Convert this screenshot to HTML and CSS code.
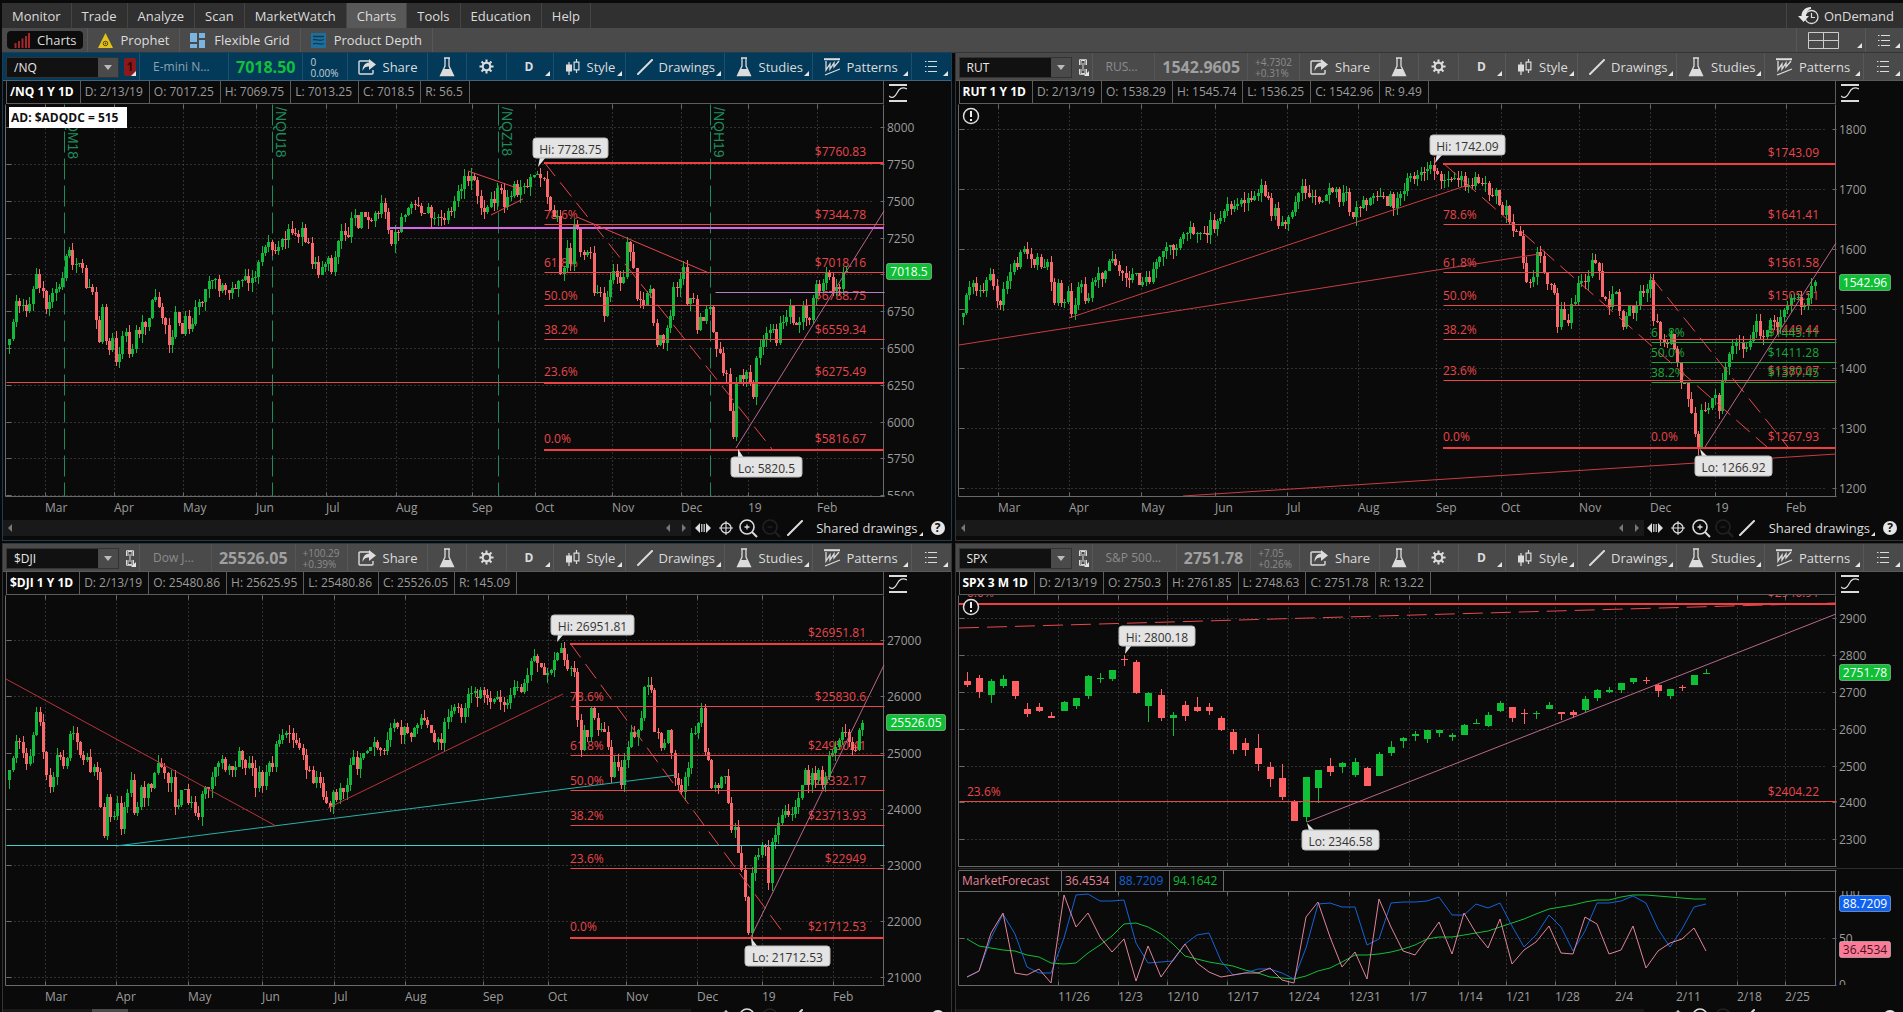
FILE: index.html
```html
<!DOCTYPE html>
<html lang="en">
<head>
<meta charset="utf-8">
<title>Charts</title>
<link rel="stylesheet" href="styles.css">
</head>
<body>
<svg class="sprite" aria-hidden="true">
  <symbol id="i-share" viewBox="0 0 18 16"><path d="M11 2H2a1 1 0 0 0-1 1v11a1 1 0 0 0 1 1h12a1 1 0 0 0 1-1v-3" fill="none" stroke="currentColor" stroke-width="1.4"/><path d="M11 0l7 5.500-7 5.500V7.500C8 7.300 6 8.500 4.500 12 4.500 7 7 3.700 11 3.500z" fill="currentColor"/></symbol>
  <symbol id="i-flask" viewBox="0 0 16 20"><path d="M5 1h6M6 1v8L1.500 18.500h13L10 9V1" fill="none" stroke="currentColor" stroke-width="1.300"/><path d="M4.500 12h7l3 6.500h-13z" fill="currentColor"/></symbol>
  <symbol id="i-gear" viewBox="0 0 16 16"><g stroke="currentColor" fill="none"><circle cx="8" cy="8" r="4" stroke-width="2.200"/><path stroke-width="2.200" d="M8 .5v3M8 12.500v3M.5 8h3M12.500 8h3M2.700 2.700l2.100 2.100M11.200 11.200l2.100 2.100M2.700 13.300l2.100-2.100M11.200 4.800l2.100-2.100"/></g></symbol>
  <symbol id="i-style" viewBox="0 0 14 16"><path d="M3 3v13M10.500 0v3M10.500 11v3" stroke="currentColor" stroke-width="1.200"/><path d="M0 5.500h6v7H0z" fill="currentColor"/><path d="M8.100 3.100h4.800v7.800H8.100z" fill="none" stroke="currentColor" stroke-width="1.200"/></symbol>
  <symbol id="i-line" viewBox="0 0 16 16"><path d="M1 15L15 1" stroke="currentColor" stroke-width="2" stroke-linecap="round"/></symbol>
  <symbol id="i-pattern" viewBox="0 0 17 18"><path d="M0 1.200h16" stroke="currentColor" stroke-width="2"/><path d="M2 3v9l4-6v5l4-6v4l5-6M1 17l15-6" fill="none" stroke="currentColor" stroke-width="1.300"/></symbol>
  <symbol id="i-list" viewBox="0 0 12 13"><path d="M3 1.500h9M3 6.500h9M3 11.500h9M0 1.500h1.500M0 6.500h1.500M0 11.500h1.500" stroke="currentColor" stroke-width="1.200"/></symbol>
  <symbol id="i-link" viewBox="0 0 9 16"><path d="M3 6V1.500h4V6M3 10v4.500h4V10M5 4v8M1.500 6V.7h7V6M1.500 10v5.300h7V10" fill="none" stroke="currentColor" stroke-width="1"/></symbol>
  <symbol id="i-curve" viewBox="0 0 18 18"><path d="M0 1h18M0 17h18" stroke="currentColor" stroke-width="2"/><path d="M0 12c3 3 6 1 8-3s5-7 10-4" fill="none" stroke="currentColor" stroke-width="1.200"/></symbol>
  <symbol id="i-spread" viewBox="0 0 16 12"><path d="M5 1v10L0 6zM11 1v10l5-5z" fill="currentColor"/><path d="M6.500 2v8M8 2v8M9.500 2v8" stroke="currentColor" stroke-width=".8"/></symbol>
  <symbol id="i-cross" viewBox="0 0 14 14"><circle cx="7" cy="7" r="5" fill="none" stroke="currentColor" stroke-width="1.300"/><path d="M7 0v14M0 7h14" stroke="currentColor" stroke-width="1.100"/></symbol>
  <symbol id="i-zin" viewBox="0 0 19 19"><circle cx="8" cy="8" r="7" fill="none" stroke="currentColor" stroke-width="1.600"/><path d="M5.500 8h5M8 5.500v5" stroke="currentColor" stroke-width="1.300"/><path d="M13 13l5 5" stroke="currentColor" stroke-width="2"/></symbol>
  <symbol id="i-zout" viewBox="0 0 19 19"><circle cx="8" cy="8" r="7" fill="none" stroke="currentColor" stroke-width="1.600"/><path d="M5.500 8h5" stroke="currentColor" stroke-width="1.300"/><path d="M13 13l5 5" stroke="currentColor" stroke-width="2"/></symbol>
</svg>

<header>
  <nav class="menu" aria-label="Main">
    <button>Monitor</button><button>Trade</button><button>Analyze</button><button>Scan</button><button>MarketWatch</button><button class="on">Charts</button><button>Tools</button><button>Education</button><button>Help</button>
    <button class="ondemand"><svg width="21" height="18" viewBox="0 0 21 18"><circle cx="13.500" cy="10" r="6.500" fill="none" stroke="#ddd" stroke-width="1.300"/><path d="M13.500 6v4.500h3.500" fill="none" stroke="#ddd" stroke-width="1.200"/><path d="M13 0C7 0 3.500 4 3.500 9H0l5.500 6L11 9H8c0-4 2-6.500 5-7z" fill="#e6e6e6"/></svg>OnDemand</button>
  </nav>
  <nav class="submenu" aria-label="Charts">
    <div class="sub"><button class="pill"><svg width="16" height="15" viewBox="0 0 16 15"><path d="M1.500 15V10M5 15V8M8.500 15V5.500M12 15V3M15 15V0" stroke="#a3262a" stroke-width="2"/></svg>Charts</button></div>
    <div class="sub"><button><svg width="15" height="15" viewBox="0 0 15 15"><path d="M7.500 0L15 15H0z" fill="#e3c21c"/><circle cx="7.500" cy="10.500" r="2.300" fill="none" stroke="#5a4a08"/><circle cx="7.500" cy="10.500" r=".9" fill="#5a4a08"/></svg>Prophet</button></div>
    <div class="sub"><button><svg width="16" height="15" viewBox="0 0 16 15"><path d="M0 0h7v9H0zM9 0h6v5H9zM0 11h7v4H0zM9 7h6v8H9z" fill="#7ab4e0"/></svg>Flexible Grid</button></div>
    <div class="sub"><button><svg width="15" height="15" viewBox="0 0 15 15"><path d="M0 0h15v15H0z" fill="#1f6f9c"/><path d="M2 3.500h11M2 7c3-2 5 2 11-.5M2 11c4-2 6 1.500 11-.5" fill="none" stroke="#0c3a56" stroke-width="1.300"/></svg>Product Depth</button></div>
    <div class="subright">
      <button class="gridpick drop" aria-label="Grid layout"><svg width="31" height="17" viewBox="0 0 31 17"><path d="M.5.5h30v16H.5zM15.500.5v16M.5 8.500h30" fill="none" stroke="#ccc"/></svg></button>
      <button class="listpick drop" aria-label="Menu"><svg width="12" height="13"><use href="#i-list"/></svg></button>
    </div>
  </nav>
</header>

<main>
  <section class="pane active" aria-label="/NQ">
    <div class="toolbar">
      <div class="symbol"><input aria-label="Symbol" value="/NQ"><button class="arrow" aria-label="Symbols"></button></div>
      <button class="link red drop" aria-label="Link"><b>1</b></button>
      <div class="quote"><span class="name">E-mini N…</span><b class="price">7018.50</b><span class="chg">0<br>0.00%</span></div>
      <button class="w-share"><svg width="18" height="16"><use href="#i-share"/></svg>Share</button>
      <button class="w-icon" aria-label="Studies setup"><svg width="16" height="20"><use href="#i-flask"/></svg></button>
      <button class="w-gear" aria-label="Settings"><svg width="15" height="15"><use href="#i-gear"/></svg></button>
      <button class="w-agg drop"><b>D</b></button>
      <button class="w-style drop"><svg width="14" height="16"><use href="#i-style"/></svg>Style</button>
      <button class="w-wide drop"><svg width="16" height="16"><use href="#i-line"/></svg>Drawings</button>
      <button class="w-studies drop"><svg width="16" height="20"><use href="#i-flask"/></svg>Studies</button>
      <button class="w-wide drop"><svg width="17" height="18"><use href="#i-pattern"/></svg>Patterns</button>
      <button class="w-list drop" aria-label="Menu"><svg width="12" height="13"><use href="#i-list"/></svg></button>
    </div>
    <div class="info"><div class="cells"><b>/NQ 1 Y 1D</b><span>D: 2/13/19</span><span>O: 7017.25</span><span>H: 7069.75</span><span>L: 7013.25</span><span>C: 7018.5</span><span>R: 56.5</span></div><button class="curve" aria-label="Scale"><svg width="18" height="18"><use href="#i-curve"/></svg></button></div>
    <div class="chart" data-chart="nq"></div>
    <div class="footer">
      <div class="track"><i class="left"></i><span></span><i class="left"></i><i class="right"></i></div>
      <button aria-label="Spread"><svg width="16" height="12"><use href="#i-spread"/></svg></button><button aria-label="Crosshair"><svg width="14" height="14"><use href="#i-cross"/></svg></button><button aria-label="Zoom in"><svg width="19" height="19"><use href="#i-zin"/></svg></button><button class="off" aria-label="Zoom out"><svg width="19" height="19"><use href="#i-zout"/></svg></button><button aria-label="Line"><svg width="16" height="16"><use href="#i-line"/></svg></button>
      <button class="shared drop">Shared drawings</button><button class="help" aria-label="Help">?</button>
    </div>
  </section>

  <section class="pane" aria-label="RUT">
    <div class="toolbar">
      <div class="symbol"><input aria-label="Symbol" value="RUT"><button class="arrow" aria-label="Symbols"></button></div>
      <button class="link drop" aria-label="Link"><svg width="9" height="16"><use href="#i-link"/></svg></button>
      <div class="quote"><span class="name">RUS…</span><b class="price">1542.9605</b><span class="chg">+4.7302<br>+0.31%</span></div>
      <button class="w-share"><svg width="18" height="16"><use href="#i-share"/></svg>Share</button>
      <button class="w-icon" aria-label="Studies setup"><svg width="16" height="20"><use href="#i-flask"/></svg></button>
      <button class="w-gear" aria-label="Settings"><svg width="15" height="15"><use href="#i-gear"/></svg></button>
      <button class="w-agg drop"><b>D</b></button>
      <button class="w-style drop"><svg width="14" height="16"><use href="#i-style"/></svg>Style</button>
      <button class="w-wide drop"><svg width="16" height="16"><use href="#i-line"/></svg>Drawings</button>
      <button class="w-studies drop"><svg width="16" height="20"><use href="#i-flask"/></svg>Studies</button>
      <button class="w-wide drop"><svg width="17" height="18"><use href="#i-pattern"/></svg>Patterns</button>
      <button class="w-list drop" aria-label="Menu"><svg width="12" height="13"><use href="#i-list"/></svg></button>
    </div>
    <div class="info"><div class="cells"><b>RUT 1 Y 1D</b><span>D: 2/13/19</span><span>O: 1538.29</span><span>H: 1545.74</span><span>L: 1536.25</span><span>C: 1542.96</span><span>R: 9.49</span></div><button class="curve" aria-label="Scale"><svg width="18" height="18"><use href="#i-curve"/></svg></button></div>
    <div class="chart" data-chart="rut"></div>
    <div class="footer">
      <div class="track"><i class="left"></i><span></span><i class="left"></i><i class="right"></i></div>
      <button aria-label="Spread"><svg width="16" height="12"><use href="#i-spread"/></svg></button><button aria-label="Crosshair"><svg width="14" height="14"><use href="#i-cross"/></svg></button><button aria-label="Zoom in"><svg width="19" height="19"><use href="#i-zin"/></svg></button><button class="off" aria-label="Zoom out"><svg width="19" height="19"><use href="#i-zout"/></svg></button><button aria-label="Line"><svg width="16" height="16"><use href="#i-line"/></svg></button>
      <button class="shared drop">Shared drawings</button><button class="help" aria-label="Help">?</button>
    </div>
  </section>

  <section class="pane" aria-label="$DJI">
    <div class="toolbar">
      <div class="symbol"><input aria-label="Symbol" value="$DJI"><button class="arrow" aria-label="Symbols"></button></div>
      <button class="link drop" aria-label="Link"><svg width="9" height="16"><use href="#i-link"/></svg></button>
      <div class="quote"><span class="name">Dow J…</span><b class="price">25526.05</b><span class="chg">+100.29<br>+0.39%</span></div>
      <button class="w-share"><svg width="18" height="16"><use href="#i-share"/></svg>Share</button>
      <button class="w-icon" aria-label="Studies setup"><svg width="16" height="20"><use href="#i-flask"/></svg></button>
      <button class="w-gear" aria-label="Settings"><svg width="15" height="15"><use href="#i-gear"/></svg></button>
      <button class="w-agg drop"><b>D</b></button>
      <button class="w-style drop"><svg width="14" height="16"><use href="#i-style"/></svg>Style</button>
      <button class="w-wide drop"><svg width="16" height="16"><use href="#i-line"/></svg>Drawings</button>
      <button class="w-studies drop"><svg width="16" height="20"><use href="#i-flask"/></svg>Studies</button>
      <button class="w-wide drop"><svg width="17" height="18"><use href="#i-pattern"/></svg>Patterns</button>
      <button class="w-list drop" aria-label="Menu"><svg width="12" height="13"><use href="#i-list"/></svg></button>
    </div>
    <div class="info"><div class="cells"><b>$DJI 1 Y 1D</b><span>D: 2/13/19</span><span>O: 25480.86</span><span>H: 25625.95</span><span>L: 25480.86</span><span>C: 25526.05</span><span>R: 145.09</span></div><button class="curve" aria-label="Scale"><svg width="18" height="18"><use href="#i-curve"/></svg></button></div>
    <div class="chart" data-chart="dji"></div>
    <div class="footer">
      <div class="track thumb"><i class="left"></i><span></span><i class="left"></i><i class="right"></i></div>
      <button aria-label="Spread"><svg width="16" height="12"><use href="#i-spread"/></svg></button><button aria-label="Crosshair"><svg width="14" height="14"><use href="#i-cross"/></svg></button><button aria-label="Zoom in"><svg width="19" height="19"><use href="#i-zin"/></svg></button><button class="off" aria-label="Zoom out"><svg width="19" height="19"><use href="#i-zout"/></svg></button><button aria-label="Line"><svg width="16" height="16"><use href="#i-line"/></svg></button>
      <button class="shared drop">Shared drawings</button><button class="help" aria-label="Help">?</button>
    </div>
  </section>

  <section class="pane" aria-label="SPX">
    <div class="toolbar">
      <div class="symbol"><input aria-label="Symbol" value="SPX"><button class="arrow" aria-label="Symbols"></button></div>
      <button class="link drop" aria-label="Link"><svg width="9" height="16"><use href="#i-link"/></svg></button>
      <div class="quote"><span class="name">S&amp;P 500…</span><b class="price">2751.78</b><span class="chg">+7.05<br>+0.26%</span></div>
      <button class="w-share"><svg width="18" height="16"><use href="#i-share"/></svg>Share</button>
      <button class="w-icon" aria-label="Studies setup"><svg width="16" height="20"><use href="#i-flask"/></svg></button>
      <button class="w-gear" aria-label="Settings"><svg width="15" height="15"><use href="#i-gear"/></svg></button>
      <button class="w-agg drop"><b>D</b></button>
      <button class="w-style drop"><svg width="14" height="16"><use href="#i-style"/></svg>Style</button>
      <button class="w-wide drop"><svg width="16" height="16"><use href="#i-line"/></svg>Drawings</button>
      <button class="w-studies drop"><svg width="16" height="20"><use href="#i-flask"/></svg>Studies</button>
      <button class="w-wide drop"><svg width="17" height="18"><use href="#i-pattern"/></svg>Patterns</button>
      <button class="w-list drop" aria-label="Menu"><svg width="12" height="13"><use href="#i-list"/></svg></button>
    </div>
    <div class="info"><div class="cells"><b>SPX 3 M 1D</b><span>D: 2/13/19</span><span>O: 2750.3</span><span>H: 2761.85</span><span>L: 2748.63</span><span>C: 2751.78</span><span>R: 13.22</span></div><button class="curve" aria-label="Scale"><svg width="18" height="18"><use href="#i-curve"/></svg></button></div>
    <div class="chart" data-chart="spx"></div>
    <div class="footer">
      <div class="track"><i class="left"></i><span></span><i class="left"></i><i class="right"></i></div>
      <button aria-label="Spread"><svg width="16" height="12"><use href="#i-spread"/></svg></button><button aria-label="Crosshair"><svg width="14" height="14"><use href="#i-cross"/></svg></button><button aria-label="Zoom in"><svg width="19" height="19"><use href="#i-zin"/></svg></button><button class="off" aria-label="Zoom out"><svg width="19" height="19"><use href="#i-zout"/></svg></button><button aria-label="Line"><svg width="16" height="16"><use href="#i-line"/></svg></button>
      <button class="shared drop">Shared drawings</button><button class="help" aria-label="Help">?</button>
    </div>
  </section>
</main>
<script src="charts.js"></script>
</body>
</html>
```

FILE: styles.css
```css
* { box-sizing: border-box; }
body {
  margin: 0;
  height: 100vh;
  overflow: hidden;
  display: flex;
  flex-direction: column;
  background: #0a0a0a;
  color: #dcdcdc;
  font: 13px/16px "Open Sans", "Noto Sans", sans-serif;
}
button, input {
  font: inherit;
  color: inherit;
  background: none;
  border: 0;
  padding: 0;
  margin: 0;
}
svg { flex: none; }
.sprite { position: absolute; width: 0; height: 0; }

header { flex: none; padding: 3px 0 0 2px; }
.menu { display: flex; height: 25px; background: #303030; }
.menu button { padding: 0 10px; border-right: 1px solid #444; }
.menu .on { background: #585858; }
.menu .ondemand {
  margin-left: auto;
  display: flex;
  align-items: center;
  gap: 5px;
  padding: 0 9px 0 11px;
  border-right: 0;
  border-left: 1px solid #444;
}
.submenu { display: flex; height: 25px; background: #4a4a4a; border-bottom: 1px solid #3a3a3a; }
.sub { display: flex; align-items: center; padding: 0 10px; border-right: 1px solid #585858; }
.sub:first-child { padding: 0 4px 0 5px; }
.sub button { display: flex; align-items: center; gap: 8px; height: 18px; }
.sub .pill { gap: 7px; background: #0c0c0c; border-radius: 4px; padding: 0 6px 0 7px; }
.subright { margin-left: auto; display: flex; }
.subright button { display: flex; align-items: center; border-left: 1px solid #585858; }
.gridpick { width: 69px; padding-left: 11px; }
.listpick { width: 38px; padding-left: 12px; }

.drop { position: relative; }
.drop::after {
  content: "";
  position: absolute;
  right: 3px;
  bottom: 4px;
  border: solid transparent;
  border-width: 0 0 5px 5px;
  border-bottom-color: #e6e6e6;
}

main {
  flex: 1;
  min-height: 0;
  display: grid;
  grid-template-columns: 1fr 1fr;
  grid-template-rows: minmax(487px, 1fr) minmax(485px, 1fr);
  column-gap: 5px;
  row-gap: 4px;
  padding-left: 3px;
  background: #080808;
}
.pane { display: flex; flex-direction: column; min-width: 0; background: #0a0a0a; box-shadow: 0 0 0 1px #343434; }
.pane.active { box-shadow: 0 0 0 1px #1f3d50; }

.toolbar { display: flex; height: 28px; background: #4a4a4a; border-bottom: 1px solid #5a5a5a; }
.active .toolbar { background: #033a5a; border-color: #44627a; }
.toolbar > button {
  display: flex;
  align-items: center;
  flex: none;
  gap: 7px;
  border-right: 1px solid #585858;
}
.active .toolbar > button { border-color: #1d4f6c; }
.toolbar > button:last-child { border-right: 0; }
.symbol { display: flex; flex: none; width: 113px; height: 21px; margin: 4px 0 0 3px; border: 1px solid #333; background: #111; }
.symbol input { flex: 1; min-width: 0; padding-left: 7px; font-size: 12px; color: #e8e8e8; }
.arrow { display: flex; width: 20px; align-items: center; justify-content: center; background: #4a4a4a; }
.arrow::before { content: ""; border: solid transparent; border-width: 5px 4px 0; border-top-color: #bbb; }
.toolbar .link { width: 21px; padding-left: 6px; }
.link.red b { width: 12px; height: 18px; margin-left: -1px; background: #8c1a1c; color: #3a0606; border-radius: 2px; font-size: 12px; line-height: 18px; }
.quote { display: flex; flex: 1 1 208px; min-width: 0; border-right: 1px solid #585858; color: #8c8c8c; }
.active .quote { border-color: #1d4f6c; }
.name { flex: 1; min-width: 0; padding-left: 13px; font-size: 12px; line-height: 28px; white-space: nowrap; overflow: hidden; }
.price { padding: 0 7px; font-size: 16px; line-height: 28px; border: solid #555; border-width: 0 1px; color: #a0a0a0; }
.chg { padding: 4px 7px 0; font-size: 10px; line-height: 11px; }
.active .quote { color: #8ba3b0; }
.active .price { color: #12bf3c; border-color: #1d4f6c; }
.active .chg { color: #c5d0d6; padding-right: 8px; }
.w-share { width: 80px; padding-left: 10px; }
.w-icon { width: 39px; justify-content: center; }
.w-gear { width: 40px; justify-content: center; }
.w-agg { width: 47px; padding-left: 18px; font-size: 12px; }
.w-style { width: 72px; padding-left: 12px; }
.w-wide { width: 99px; padding-left: 11px; }
.toolbar > .w-wide { gap: 6px; }
.w-studies { width: 88px; padding-left: 11px; }
.w-list { width: 39px; padding-left: 13px; }

.info { display: flex; height: 23px; }
.cells {
  flex: 1;
  display: flex;
  margin-left: 3px;
  border: solid #5c5c5c;
  border-width: 0 1px 1px;
  font-size: 12px;
  line-height: 22px;
  color: #9a9a9a;
  white-space: nowrap;
}
.cells b, .cells span { padding: 0 6px 0 4px; border-right: 1px solid #5c5c5c; }
.cells b { color: #fff; padding-left: 3px; }
.curve { width: 67px; padding-left: 5px; text-align: left; }
.curve svg { display: block; }

.chart { flex: 1; min-height: 0; position: relative; }
.chart svg { position: absolute; inset: 0; width: 100%; height: 100%; }
.chart text { font-size: 12px; }

.footer { display: flex; align-items: flex-start; height: 20px; padding-right: 6px; }
.footer button { display: flex; align-items: center; justify-content: center; height: 16px; width: 23px; }
.track { flex: 1; display: flex; align-items: center; gap: 12px; height: 16px; padding: 0 5px; background: #191919; }
.track span { flex: 1; height: 16px; }
.track.thumb span { background: linear-gradient(#4a4a4a, #4a4a4a) 68px 0 / 36px 16px no-repeat; }
.track i { border: 4px solid transparent; }
.track .left { border-right-color: #777; border-left-width: 0; }
.track .right { border-left-color: #777; border-right-width: 0; }
.footer .off { color: #222; }
.footer .shared { width: auto; margin-left: 10px; padding-right: 5px; }
.footer .shared::after { right: 0; bottom: 0; border-width: 0 0 4px 4px; }
.footer .help { width: 14px; height: 14px; margin: 1px 0 0 8px; border-radius: 7px; background: #e6e6e6; color: #111; font-weight: bold; font-size: 12px; }
```

FILE: charts.js
```js
// Every chart is described on a 948px wide sheet; "origin" is the sheet's top-left
// corner in workspace coordinates. draw() maps the sheet onto the current pane size.
const RED = '#e8474c', GREEN = '#0fbf35', UP = '#12b83a', DOWN = '#f9686a', GRID = '#585858', AXIS = '#6a6a6a', TXT = '#9c9c9c';
const PINK = '#b8688a', CYAN = '#45cfd0', BLUE = '#1462d8', ROSE = '#e08498';

const charts = {
  nq: {
    origin: [3, 104], height: 416, right: 884, left: 6, bottom: 496,
    months: [[45,'Mar'],[114,'Apr'],[183,'May'],[256,'Jun'],[326,'Jul'],[396,'Aug'],[472,'Sep'],[535,'Oct'],[612,'Nov'],[681,'Dec'],[748,'19'],[817,'Feb']],
    levels: [[127,'8000'],[164,'7750'],[201,'7500'],[238,'7250'],[274,''],[311,'6750'],[348,'6500'],[385,'6250'],[422,'6000'],[458,'5750'],[495,'5500']],
    rolls: [[65,'/NQM18'],[273,'/NQU18'],[499,'/NQZ18'],[711,'/NQH19']],
    fib: { x: 544, end: 866, rows: [[162,'','$7760.83',2],[224,'78.6%','$7344.78'],[272,'61.8%','$7018.16'],[305,'50.0%','$6788.75'],[339,'38.2%','$6559.34'],[382,'23.6%','$6275.49',2],[449,'0.0%','$5816.67',2]] },
    lines: [[6,382,884,382,RED],[388,228,884,228,'#d866e8',2],[715,292,884,292,'#b87cc4'],[577,217,709,273,RED],[468,171,517,188,RED],[491,215,523,199,RED],[544,162,772,449,RED,1,'18 8'],[736,448,884,211,PINK]],
    hi: [533,138,75,538,167,'Hi: 7728.75'], lo: [731,457,71,738,449,'Lo: 5820.5'],
    tags: [[886,271,46,'7018.5',GREEN,'#fff']],
    runs: [
      { x: 9.3, end: 474.3, y: 100, open: 735, c: [718,665,603,618,616,632,612,566,522,565,572,628,607,578,568,560,535,467,450,495,492,490,505,563,560,576,660,725,622,722,750,715,785,762,708,697,763,748,690,703,665,682,655,600,590,620,655,675,735,710,637,670,702,648,688,672,620,605,606,568,543,540,538,572,555,570,578,563,566,543,541,528,548,533,531,487,458,440,427,450,452,440,418,420,386,400,403,412,385,425,428,492,485,525,500,492,473,515,470,422,392,405,412,353,345,383,337,350,360,362,338,343,310,335,390,433,395,397,350,346,325,313,316,318,340,340,320,355,354,352,355,360,332,333,303,272,268,227,243,228,240] },
      { x: 477.3, end: 846, y: 100, open: 240, c: [288,323,335,320,296,310,265,270,322,290,288,253,285,262,258,262,230,225,222,235,236,292,330,350,348,522,505,443,492,373,388,455,465,455,458,580,577,580,648,592,540,513,530,548,532,427,455,505,597,600,618,578,567,668,736,705,730,685,648,562,563,538,500,613,595,597,690,652,662,628,622,697,748,760,820,822,932,1012,845,825,838,815,850,890,775,740,718,700,690,688,730,668,665,650,617,670,675,665,617,655,660,595,553,573,548,518,532,572,560,567,515,513] }
    ]
  },
  rut: {
    origin: [956, 104], height: 416, right: 1836, left: 959, bottom: 496, warn: 116,
    months: [[998,'Mar'],[1069,'Apr'],[1141,'May'],[1215,'Jun'],[1287,'Jul'],[1358,'Aug'],[1436,'Sep'],[1501,'Oct'],[1579,'Nov'],[1650,'Dec'],[1715,'19'],[1786,'Feb']],
    levels: [[129,'1800'],[189,'1700'],[249,'1600'],[309,'1500'],[368,'1400'],[428,'1300'],[488,'1200']],
    fib: { x: 1443, end: 1819, rows: [[163,'','$1743.09',2],[224,'78.6%','$1641.41'],[272,'61.8%','$1561.58'],[305,'50.0%','$1505.51'],[339,'38.2%','$1449.44'],[380,'23.6%','$1380.07'],[447,'0.0%','$1267.93',2]] },
    fib2: { x: 1651, end: 1819, color: '#18a83a', rows: [[342,'61.8%','$1445.11'],[362,'50.0%','$1411.28'],[382,'38.2%','$1377.45']] },
    notes: [[1651,436,'0.0%',RED]],
    lines: [[1069,318,1468,185,'#c83c44'],[959,345,1539,254,'#c83c44'],[1183,496,1836,454,'#c83c44'],[1443,163,1767,447,RED,1,'18 8'],[1651,277,1788,447,RED,1,'18 8'],[1705,447,1836,243,PINK]],
    hi: [1430,135,75,1435,163,'Hi: 1742.09'], lo: [1695,456,77,1700,449,'Lo: 1266.92'],
    tags: [[1839,282,52,'1542.96',GREEN,'#fff']],
    runs: [
      { x: 962.7, end: 1424, y: 50, open: 800, c: [790,735,710,698,722,720,722,690,672,708,752,765,717,693,665,640,650,605,597,612,628,645,622,652,650,635,697,760,698,758,755,722,792,765,710,703,752,745,697,690,670,688,662,632,628,645,662,668,685,690,672,670,705,695,680,695,658,636,622,602,590,586,600,595,567,552,548,530,553,550,549,550,555,510,538,512,505,483,462,478,468,462,450,458,445,450,437,430,405,437,445,497,475,527,517,522,500,487,455,428,408,428,442,438,440,457,452,435,415,425,417,457,430,425,487,502,472,475,450,465,445,437,440,437,438,468,432,473,445,432,422,385,378,388,375,367,368] },
      { x: 1427, end: 1814.7, y: 100, open: 212, c: [207,195,212,222,243,240,237,238,235,240,228,262,255,258,232,248,253,250,285,287,270,315,345,318,365,392,393,408,490,545,545,532,455,468,518,553,555,580,682,627,660,668,612,605,550,543,545,528,480,488,512,590,597,622,582,577,633,682,648,618,640,615,573,580,568,540,662,665,718,730,732,703,747,790,850,850,898,940,1002,1040,930,930,925,895,885,932,840,800,762,738,725,727,748,742,722,695,663,708,712,690,660,667,680,650,630,615,595,593,590,622,615,595,557,547] }
    ]
  },
  dji: {
    origin: [3, 595], height: 414, right: 884, left: 6, bottom: 985,
    months: [[45,'Mar'],[116,'Apr'],[188,'May'],[262,'Jun'],[334,'Jul'],[405,'Aug'],[483,'Sep'],[548,'Oct'],[626,'Nov'],[697,'Dec'],[762,'19'],[833,'Feb']],
    levels: [[640,'27000'],[696,'26000'],[753,'25000'],[809,'24000'],[865,'23000'],[921,'22000'],[977,'21000']],
    fib: { x: 570, end: 866, rows: [[643,'','$26951.81',2],[706,'78.6%','$25830.6'],[755,'61.8%','$24950.41'],[790,'50.0%','$24332.17'],[825,'38.2%','$23713.93'],[868,'23.6%','$22949'],[937,'0.0%','$21712.53',2]] },
    lines: [[6,845,884,845,CYAN],[116,846,676,775,'#27b0a8'],[6,679,276,826,'#b8343c'],[328,808,563,694,'#b8343c'],[570,643,782,931,RED,1,'18 8'],[751,937,884,665,PINK]],
    hi: [551,615,83,557,642,'Hi: 26951.81'], lo: [745,946,85,751,938,'Lo: 21712.53'],
    tags: [[886,722,60,'25526.05',GREEN,'#fff']],
    runs: [
      { x: 9.3, end: 474.7, y: 540, open: 720, c: [690,655,603,605,640,672,648,585,517,545,635,705,740,710,645,650,678,655,583,580,605,645,660,650,697,682,695,800,887,770,832,828,790,868,800,760,720,818,800,742,775,732,745,700,668,680,700,730,712,800,795,750,748,790,785,820,832,762,740,748,712,682,668,658,690,678,690,680,632,660,685,670,685,745,697,738,697,670,680,612,600,585,578,580,600,608,625,645,690,690,728,710,730,770,790,802,755,780,745,755,735,675,652,688,655,640,632,622,605,625,630,632,600,565,548,560,585,562,580,590,565,555,535,540,555,580,605,598,610,545,530,512,500,505,530,505,462,458,452] },
      { x: 477, end: 862, y: 540, open: 470, c: [475,450,465,475,485,478,472,487,495,490,465,442,440,455,430,405,362,348,370,380,405,400,390,360,340,325,360,388,385,397,540,630,570,590,505,535,570,568,575,620,710,665,680,735,660,620,575,590,570,535,440,435,450,575,580,625,610,570,640,715,735,755,710,685,580,578,548,505,635,660,745,735,745,710,708,790,870,860,940,990,1070,1180,1000,950,945,918,922,1030,905,885,850,825,812,825,822,800,775,735,690,735,700,720,690,735,710,645,640,620,600,575,575,605,630,630,570,548] }
    ]
  },
  spx: {
    origin: [956, 595], height: 414, right: 1836, left: 959, bottom: 866, warn: 607, study: [870, 891, 985],
    months: [[1058,'11/26'],[1118,'12/3'],[1167,'12/10'],[1227,'12/17'],[1288,'12/24'],[1349,'12/31'],[1409,'1/7'],[1458,'1/14'],[1506,'1/21'],[1555,'1/28'],[1615,'2/4'],[1676,'2/11'],[1737,'2/18'],[1785,'2/25']],
    levels: [[618,'2900'],[655,'2800'],[692,'2700'],[729,'2600'],[766,'2500'],[802,'2400'],[839,'2300']],
    fib: { x: 967, lineX: 959, end: 1819, rows: [[603,'0.0%','$2940.91',2],[801,'23.6%','$2404.22']] },
    lines: [[959,628,1836,603,RED,1,'20 8'],[1307,822,1836,614,PINK]],
    hi: [1119,626,76,1125,654,'Hi: 2800.18'], lo: [1302,830,77,1307,823,'Lo: 2346.58'],
    tags: [[1839,672,52,'2751.78',GREEN,'#fff'],[1839,903,52,'88.7209','#0f62f0','#fff'],[1839,949,52,'36.4534','#fb7c98','#4a1020']],
    bars: [[52,397,423,435,440],[88,405,414,456,473],[124,418,423,465,490,1],[160,405,417,438,445,1],[196,422,423,468,478],[232,490,507,522,532],[268,490,501,513,515],[304,515,528,534,535],[343,484,486,513,514,1],[379,474,475,498,506,1],[415,405,408,468,476,1],[451,398,413,416,430,1],[487,389,390,417,423,1],[523,345,357,360,377],[559,361,366,460,462],[595,456,459,498,545,1],[634,447,465,534,542],[670,516,525,535,587,1],[706,484,495,528,544],[742,472,501,513,515],[778,490,501,513,526],[814,528,534,570,574],[850,566,576,630,643],[886,595,608,630,648],[925,583,624,672,692],[961,667,681,717,742],[997,672,714,771,779],[1033,779,786,843,844],[1069,710,711,831,845,1],[1105,689,690,744,790,1],[1141,655,678,696,708],[1177,666,669,682,698,1],[1216,655,666,706,712,1],[1252,682,684,738,739],[1288,636,642,708,708,1],[1324,603,621,639,648,1],[1360,590,594,602,625,1],[1396,572,582,588,602,1],[1432,570,570,598,608,1],[1468,570,570,580,592,1],[1507,578,586,590,602,1],[1543,553,555,585,586,1],[1579,538,548,551,553,1],[1615,516,524,558,560,1],[1651,484,489,513,515,1],[1687,501,501,534,547],[1723,507,519,523,553],[1759,514,519,523,538,1],[1798,486,494,507,508,1],[1834,516,517,521,540],[1870,510,515,525,533],[1906,467,477,510,518,1],[1942,448,450,474,482,1],[1978,440,449,455,460,1],[2014,428,429,450,458,1],[2050,413,414,426,432,1],[2089,412,419,423,431],[2125,432,434,453,472],[2161,447,447,468,478,1],[2197,435,441,445,453],[2233,404,405,434,434,1],[2269,388,399,402,402,1]],
    studies: [
      [GREEN, [1198,1217,1225,1231,1234,1246,1252,1268,1273,1270,1240,1215,1188,1153,1150,1162,1183,1212,1248,1258,1267,1271,1278,1289,1300,1311,1315,1318,1309,1294,1283,1265,1244,1246,1242,1237,1226,1216,1196,1192,1190,1186,1180,1174,1162,1150,1138,1122,1108,1100,1096,1087,1081,1079,1072,1066,1066,1069,1072,1075,1078,1078]],
      [BLUE, [1312,1293,1195,1122,1182,1282,1298,1300,1195,1066,1063,1084,1084,1081,1208,1270,1265,1263,1212,1184,1180,1262,1304,1298,1286,1286,1300,1318,1225,1093,1090,1102,1102,1216,1198,1090,1087,1087,1084,1072,1126,1126,1093,1105,1090,1157,1222,1186,1126,1160,1232,1172,1090,1090,1084,1068,1090,1168,1220,1168,1102,1093]],
      [ROSE, [1312,1293,1180,1120,1298,1306,1288,1328,1065,1162,1120,1192,1235,1197,1322,1218,1312,1260,1213,1268,1297,1312,1306,1298,1298,1285,1320,1330,1132,1086,1192,1280,1237,1316,1078,1162,1232,1246,1197,1147,1243,1120,1180,1225,1137,1271,1231,1205,1158,1240,1243,1130,1153,1243,1231,1157,1283,1234,1208,1198,1165,1232]]
    ]
  }
};

function draw(host) {
  const c = charts[host.dataset.chart];
  const W = host.clientWidth, H = host.clientHeight;
  const X = x => Math.round((x - c.origin[0]) * W / 948);
  const Y = y => Math.round((y - c.origin[1]) * H / c.height);
  const out = [];
  const line = (x1, y1, x2, y2, color, w = 1, dash = '') => {
    const flat = (y1 === y2 || x1 === x2) && w === 1 ? 0.5 : 0;
    out.push(`<line x1="${X(x1) + flat}" y1="${Y(y1) + flat}" x2="${X(x2) + flat}" y2="${Y(y2) + flat}" stroke="${color}" stroke-width="${w}"${dash ? ` stroke-dasharray="${dash}"` : ''}/>`);
  };
  const text = (x, y, s, color, more = '') => out.push(`<text x="${X(x)}" y="${Y(y) + 5}" fill="${color}" ${more}>${s}</text>`);
  const rect = (x, y, w, h, color) => out.push(`<rect x="${x}" y="${y}" width="${w}" height="${h}" fill="${color}"/>`);
  const top = c.origin[1];
  const clip = `clip-${host.dataset.chart}`;
  const sheetEnd = c.study ? c.study[2] : c.bottom;

  out.push(`<defs><clipPath id="${clip}"><rect x="0" y="0" width="${W}" height="${Y(c.bottom)}"/></clipPath><clipPath id="${clip}-s"><rect x="0" y="${c.study ? Y(c.study[1]) : 0}" width="${W}" height="${c.study ? Y(c.study[2]) - Y(c.study[1]) : 0}"/></clipPath></defs>`);

  // Grid, frame and ticks
  c.months.forEach(([x, s]) => {
    line(x, top, x, c.bottom, GRID, 1, '1 3');
    line(x, top, x, top + 4, AXIS); line(x, c.bottom - 4, x, c.bottom, AXIS);
    if (c.study) {
      line(x, c.study[1], x, c.study[2], GRID, 1, '1 3');
      line(x, c.study[1], x, c.study[1] + 4, AXIS); line(x, c.study[2] - 4, x, c.study[2], AXIS);
    }
    text(x, sheetEnd + 11, s, TXT);
  });
  out.push(`<g clip-path="url(#${clip})">`);
  c.levels.forEach(([y, s]) => {
    line(c.left, y, c.right - 12, y, GRID, 1, '1 3');
    line(c.left, y, c.left + 5, y, AXIS); line(c.right - 4, y, c.right, y, AXIS);
    if (s) text(c.right + 3, y, s, TXT);
  });
  out.push('</g>');
  line(c.left - 1, top, c.left - 1, c.bottom, AXIS); line(c.right - 1, top, c.right - 1, c.bottom, AXIS);
  line(c.left - 1, c.bottom, c.right, c.bottom, AXIS);

  (c.rolls || []).forEach(([x, s]) => {
    line(x - 1, top, x - 1, c.bottom, '#1f8a5c', 1, '21 6');
    out.push(`<text transform="translate(${X(x) + 3} 3) rotate(90)" fill="#1f8a5c" style="font-size:14px;font-family:'Liberation Sans',sans-serif">${s}</text>`);
  });

  out.push(`<g clip-path="url(#${clip})">`);
  [c.fib, c.fib2].forEach(f => f && f.rows.forEach(([y, pct, price, w]) => {
    const ty = y - (w ? 11 : 10);
    text(f.x, ty, pct, f.color || RED);
    text(f.end, ty, price, f.color || RED, 'text-anchor="end"');
  }));
  (c.notes || []).forEach(n => text(...n));

  // Candles: each body runs from the previous close to its own close
  let seed = 7;
  const rnd = () => (seed = seed * 16807 % 2147483647) / 2147483647;
  (c.runs || []).forEach(r => {
    let prev = r.open;
    r.c.forEach((v, i) => {
      const x = X(r.x + (r.end - r.x) * i / (r.c.length - 1));
      const hi = Y(r.y + (Math.min(prev, v) - rnd() * 24) / 3), lo = Y(r.y + (Math.max(prev, v) + rnd() * 28) / 3);
      const a = Y(r.y + Math.min(prev, v) / 3), b = Y(r.y + Math.max(prev, v) / 3);
      const color = v < prev ? UP : DOWN;
      rect(x, hi, 1, Math.max(1, lo - hi), color);
      rect(x - 1, a, 3, Math.max(1, b - a), color);
      prev = v;
    });
  });
  (c.bars || []).forEach(([bx, hi, a, b, lo, up]) => {
    const x = X(950 + bx / 3), q = v => Y(540 + v / 3), color = up ? GREEN : '#ff6063';
    rect(x, q(hi), 1, Math.max(1, q(lo) - q(hi)), color);
    rect(x - 3, q(a), 7, Math.max(1, q(b) - q(a)), color);
  });

  [c.fib, c.fib2].forEach(f => f && f.rows.forEach(([y, , , w]) => line(f.lineX || f.x, y + (w ? 1 : 0), c.right, y + (w ? 1 : 0), f.color || (w ? '#ee3e42' : RED), w || 1)));
  c.lines.forEach(l => line(...l));
  out.push('</g>');

  if (c.study) {
    const [t, m, b] = c.study;
    line(c.left - 1, t, c.right, t, AXIS); line(c.left - 1, m, c.right, m, AXIS); line(c.left - 1, b, c.right, b, AXIS);
    line(c.left - 1, t, c.left - 1, b, AXIS); line(c.right - 1, t, c.right - 1, b, AXIS);
    line(c.left - 1, t - 2, c.right + 67, t - 2, '#2c2c2c');
    [[962,'MarketForecast',ROSE,1061],[1065,'36.4534',ROSE,1115],[1119,'88.7209',BLUE,1169],[1173,'94.1642',GREEN,1223]].forEach(([x, s, color, end]) => { text(x, t + 10, s, color); line(end, t, end, m, AXIS); });
    line(c.left, 938, c.right - 12, 938, GRID, 1, '1 3');
    line(c.left, 938, c.left + 5, 938, AXIS); line(c.right - 4, 938, c.right, 938, AXIS);
    out.push(`<g clip-path="url(#${clip}-s)">`);
    text(c.right + 3, 892, '100', TXT); text(c.right + 3, 938, '50', TXT); text(c.right + 3, 984, '0', TXT);
    out.push('</g>');
    c.studies.forEach(([color, ys]) => out.push(`<polyline fill="none" stroke="${color}" stroke-width="1" points="${ys.map((y, i) => X(950 + c.bars[i][0] / 3) + ',' + Y(540 + y / 3)).join(' ')}"/>`));
  }

  // Callouts and price tags
  const callout = ([x, y, w, tx, ty, s]) => {
    const edge = ty > y ? Y(y) + 19 : Y(y) + 1;
    out.push(`<path d="M${X(tx)} ${Y(ty)}L${X(x) + 7} ${edge}H${X(x) + 13}z" fill="#e4e4e4"/><rect x="${X(x)}" y="${Y(y)}" width="${w}" height="20" rx="3" fill="#e4e4e4" stroke="#b8b8b8"/>`);
    out.push(`<text x="${X(x) + w / 2}" y="${Y(y) + 16}" text-anchor="middle" fill="#333">${s}</text>`);
  };
  callout(c.hi); callout(c.lo);
  c.tags.forEach(([x, y, w, s, bg, fg]) => {
    out.push(`<rect x="${X(x) + .5}" y="${Y(y) - 7.5}" width="${w - 1}" height="16" rx="2" fill="${bg}" stroke="#fff" stroke-opacity=".4"/><text x="${X(x) + w / 2}" y="${Y(y) + 5}" text-anchor="middle" fill="${fg}">${s}</text>`);
  });
  if (c.warn) out.push(`<circle cx="${X(971)}" cy="${Y(c.warn)}" r="7.500" fill="#0a0a0a" stroke="#ddd" stroke-width="1.500"/><path d="M${X(971)} ${Y(c.warn) - 5}v6M${X(971)} ${Y(c.warn) + 3}v2" stroke="#eee" stroke-width="2"/>`);
  if (c.rolls) out.push(`<rect x="6" y="3" width="118" height="21" fill="#fff"/><text x="8" y="18" fill="#111" font-weight="bold">AD: $ADQDC = 515</text>`);

  host.innerHTML = `<svg role="img" aria-label="${host.dataset.chart} price chart">${out.join('')}</svg>`;
}
const drawAll = () => document.querySelectorAll('.chart').forEach(draw);
addEventListener('resize', drawAll);
drawAll();
```
